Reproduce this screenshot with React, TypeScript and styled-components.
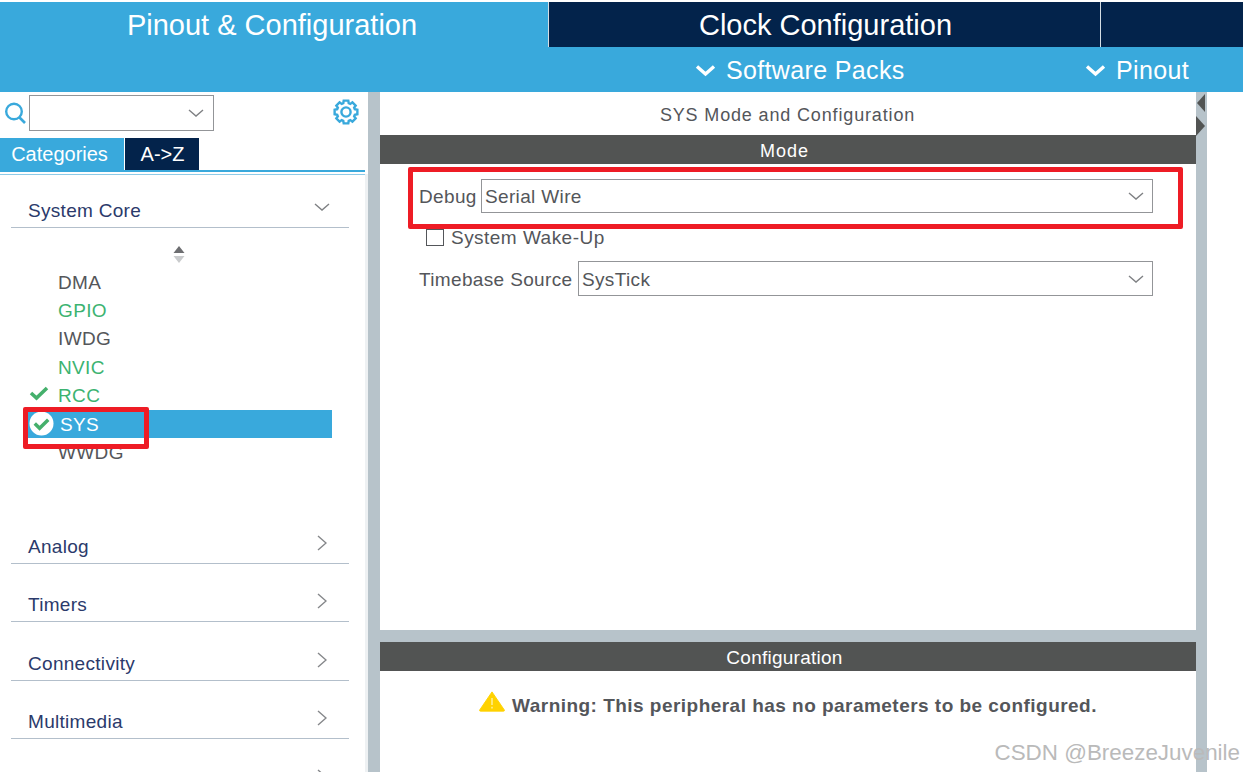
import React from 'react'
import styled, { createGlobalStyle } from 'styled-components'

const GlobalStyle = createGlobalStyle`
  html, body { margin: 0; padding: 0; background: #fff; }
  body { font-family: "Liberation Sans", Arial, sans-serif; }
`

const Page = styled.div`
  position: relative;
  width: 1243px;
  height: 772px;
  overflow: hidden;
  padding-top: 2px;
  box-sizing: border-box;
`
const TopTabs = styled.div`
  display: flex;
  height: 45px;
  background: #03234b;
`
const TopTab = styled.div<{ $active?: boolean; $w: number }>`
  width: ${p => p.$w}px;
  flex: none;
  box-sizing: border-box;
  background: ${p => (p.$active ? '#39a9dc' : '#03234b')};
  border-right: 1px solid #d5dde3;
  color: #fff;
  font-size: 29px;
  line-height: 47px;
  text-align: center;
  padding: ${p => (p.$active ? '0 4px 0 0' : '0 0 0 2px')};
`
const SubBar = styled.div`
  display: flex;
  height: 45px;
  box-sizing: border-box;
  padding-top: 2px;
  background: #39a9dc;
  color: #fff;
  font-size: 25px;
`
const SubItem = styled.div<{ $w: number }>`
  width: ${p => p.$w}px;
  flex: none;
  display: flex;
  align-items: center;
  gap: 10px;
  letter-spacing: 0.35px;
  svg { flex: none; }
`
const SubSpacer = styled.div`
  width: 695px;
  flex: none;
`
const Body = styled.div`
  display: flex;
  height: 680px;
`
const Side = styled.div`
  width: 365px;
  flex: none;
  display: flex;
  flex-direction: column;
`
const Gutter = styled.div`
  width: 3px;
  flex: none;
  margin-top: 82px;
  background: #eef1f3;
`
const Splitter = styled.div`
  width: 12px;
  flex: none;
  background: #b7c3ca;
`
const SearchRow = styled.div`
  display: flex;
  align-items: center;
  height: 42px;
  padding: 0 6px 4px 4px;
  flex: none;
  svg { flex: none; }
`
const SearchBox = styled.div`
  width: 185px;
  height: 36px;
  margin-left: 3px;
  box-sizing: border-box;
  border: 1px solid #939598;
  display: flex;
  align-items: center;
  justify-content: flex-end;
  padding-right: 9px;
`
const Cog = styled.div`
  margin-left: auto;
  margin-bottom: 3px;
  display: flex;
`
const SideTabs = styled.div`
  display: flex;
  height: 32px;
  border-bottom: 2px solid #39a9dc;
  box-shadow: 0 2px 0 #fff, 0 3px 0 #8ecbe8;
  flex: none;
`
const SideTab = styled.div<{ $dark?: boolean }>`
  width: ${p => (p.$dark ? 74 : 124)}px;
  box-sizing: border-box;
  padding: ${p => (p.$dark ? '0 0 0 1px' : '0 5px 0 0')};
  margin-right: 1px;
  background: ${p => (p.$dark ? '#03234b' : '#39a9dc')};
  color: #fff;
  font-size: 20px;
  line-height: 32px;
  text-align: center;
`
const Group = styled.div<{ $h: number }>`
  height: ${p => p.$h}px;
  margin: 0 16px 0 11px;
  box-sizing: border-box;
  border-bottom: 1px solid #b3bfcb;
  display: flex;
  align-items: flex-end;
  justify-content: space-between;
  padding: 0 19px 5px 17px;
  color: #2b3a6b;
  font-size: 19px;
  letter-spacing: 0.3px;
  line-height: 22px;
  flex: none;
`
const Caret = styled.div<{ $up: number; $side?: number }>`
  display: flex;
  margin-left: auto;
  margin-bottom: ${p => p.$up}px;
  margin-right: ${p => p.$side || 0}px;
`
const Stepper = styled.div`
  display: flex;
  justify-content: center;
  height: 22px;
  padding: 18px 7px 0 0;
  flex: none;
`
const ItemList = styled.div`
  height: 241px;
  flex: none;
  display: flex;
  flex-direction: column;
`
const Item = styled.div<{ $color?: string; $selected?: boolean }>`
  height: 28.4px;
  width: 308px;
  margin-left: 24px;
  flex: none;
  display: flex;
  align-items: center;
  box-sizing: border-box;
  padding: 1px 0 0 ${p => (p.$selected ? 36 : 34)}px;
  background: ${p => (p.$selected ? '#39a9dc' : 'transparent')};
  color: ${p => (p.$selected ? '#fff' : p.$color || '#54565a')};
  font-size: 19px;
  position: relative;
  letter-spacing: 0.35px;
`
const ItemIcon = styled.span<{ $top: number }>`
  position: absolute;
  left: 5px;
  top: ${p => p.$top}px;
  display: flex;
`
const Main = styled.div`
  width: 816px;
  flex: none;
  display: flex;
  flex-direction: column;
`
const ModeTitle = styled.div`
  height: 43px;
  flex: none;
  text-align: center;
  color: #54565a;
  font-size: 18px;
  line-height: 47px;
  padding-right: 1px;
  letter-spacing: 0.85px;
`
const Band = styled.div`
  height: 29px;
  flex: none;
  background: #525453;
  color: #fff;
  font-size: 18px;
  line-height: 32px;
  text-align: center;
  letter-spacing: 1px;
  padding-right: 7px;
`
const ConfigBand = styled(Band)`
  font-size: 19px;
  line-height: 31px;
  letter-spacing: 0.25px;
`
const ModePane = styled.div`
  height: 466px;
  flex: none;
  box-sizing: border-box;
  padding: 15px 43px 0 39px;
  display: flex;
  flex-direction: column;
`
const FormRow = styled.div`
  display: flex;
  align-items: center;
  color: #54565a;
  font-size: 19px;
  letter-spacing: 0.35px;
`
const FieldLabel = styled.span<{ $w: number }>`
  width: ${p => p.$w}px;
  padding-top: 2px;
  flex: none;
  white-space: nowrap;
`
const Select = styled.div<{ $h: number }>`
  flex: 1;
  height: ${p => p.$h}px;
  box-sizing: border-box;
  border: 1px solid #939598;
  display: flex;
  align-items: center;
  justify-content: space-between;
  padding: 2px 8px 0 3px;
  svg { margin-top: -2px; }
`
const CheckRow = styled.div`
  display: flex;
  align-items: center;
  gap: 7px;
  height: 23px;
  margin: 13px 0 12px 7px;
  color: #54565a;
  font-size: 19px;
  letter-spacing: 0.47px;
`
const CheckBox = styled.span`
  width: 18px;
  height: 17px;
  box-sizing: border-box;
  border: 1.5px solid #54565a;
  flex: none;
`
const PaneGap = styled.div`
  height: 12px;
  flex: none;
  background: #b7c3ca;
`
const ConfigPane = styled.div`
  flex: 1;
  display: flex;
  justify-content: center;
  padding: 20px 0 0 0;
`
const Warning = styled.div`
  display: flex;
  align-items: flex-start;
  gap: 7px;
  height: 26px;
  color: #54565a;
  font-size: 19px;
  font-weight: 700;
  line-height: 29px;
  letter-spacing: 0.47px;
  white-space: nowrap;
  svg { flex: none; }
`
const RightRail = styled.div`
  width: 11px;
  flex: none;
  background: #b7c3ca;
  position: relative;
`
const RailArrow = styled.span<{ $top: number; $right?: boolean }>`
  position: absolute;
  top: ${p => p.$top}px;
  left: ${p => (p.$right ? 0 : 1)}px;
  width: 0;
  height: 0;
  border-top: ${p => (p.$right ? 10 : 9)}px solid transparent;
  border-bottom: ${p => (p.$right ? 10 : 9)}px solid transparent;
  ${p => (p.$right ? 'border-left: 9px solid #525453;' : 'border-right: 8px solid #525453;')}
`
const RedBox = styled.div<{ $l: number; $t: number; $w: number; $h: number }>`
  position: absolute;
  left: ${p => p.$l}px;
  top: ${p => p.$t}px;
  width: ${p => p.$w}px;
  height: ${p => p.$h}px;
  box-sizing: border-box;
  border: 5px solid #ee1c25;
  border-radius: 2px;
`
const Watermark = styled.div`
  position: absolute;
  right: 3px;
  bottom: 6px;
  color: #bababa;
  font-size: 22.4px;
  line-height: 26px;
  white-space: nowrap;
`

function Chevron({ color = '#7f8184' }: { color?: string }) {
  return (
    <svg width="16" height="10" viewBox="0 0 16 10">
      <path d="M1 2 L8 8 L15 2" fill="none" stroke={color} strokeWidth="1.4" />
    </svg>
  )
}

function ChevronRight() {
  return (
    <svg width="10" height="16" viewBox="0 0 10 16">
      <path d="M1 1 L9 8 L1 15" fill="none" stroke="#85878a" strokeWidth="1.4" />
    </svg>
  )
}

function BoldChevron() {
  return (
    <svg width="21" height="13" viewBox="0 0 21 13">
      <path d="M2 2.5 L10.5 10 L19 2.5" fill="none" stroke="#fff" strokeWidth="3.4" />
    </svg>
  )
}

function Check() {
  return (
    <svg width="20" height="16" viewBox="0 0 20 16">
      <path d="M2 8 L7.5 13 L18 3" fill="none" stroke="#45b06c" strokeWidth="3.6" />
    </svg>
  )
}

function CircleCheck() {
  return (
    <svg width="25" height="25" viewBox="0 0 26 26">
      <circle cx="13" cy="13" r="12.5" fill="#fff" />
      <path d="M6 13 L11 18 L20 9" fill="none" stroke="#45b06c" strokeWidth="3.6" />
    </svg>
  )
}

function Search() {
  return (
    <svg width="22" height="24" viewBox="0 0 22 24">
      <circle cx="10" cy="10.5" r="7.8" fill="none" stroke="#39a9dc" strokeWidth="2.4" />
      <path d="M15.5 16.5 L21 22" stroke="#39a9dc" strokeWidth="2.6" />
    </svg>
  )
}

// outline of a gear with eight teeth, worked out from the angles
function gearPath() {
  const pts: string[] = []
  for (let i = 0; i < 8; i++) {
    const a = (i * Math.PI) / 4
    const offs: [number, number][] = [[-0.3, 9.2], [-0.2, 11.6], [0.2, 11.6], [0.3, 9.2]]
    offs.forEach(([d, r]) => {
      pts.push(`${(13 + r * Math.sin(a + d)).toFixed(2)} ${(13 - r * Math.cos(a + d)).toFixed(2)}`)
    })
  }
  return 'M' + pts.join(' L') + ' Z'
}

function Gear() {
  return (
    <svg width="26" height="26" viewBox="0 0 26 26">
      <path d={gearPath()} fill="none" stroke="#39a9dc" strokeWidth="2.4" />
      <circle cx="13" cy="13" r="4.6" fill="none" stroke="#39a9dc" strokeWidth="2.4" />
    </svg>
  )
}

function UpDown() {
  return (
    <svg width="14" height="17" viewBox="0 0 14 17">
      <path d="M7 0 L12.5 7 L1.5 7 Z" fill="#6d6e71" />
      <path d="M7 17 L12.5 10 L1.5 10 Z" fill="#c9cbcd" />
    </svg>
  )
}

function WarnIcon() {
  return (
    <svg width="26" height="21" viewBox="0 0 26 24" preserveAspectRatio="none">
      <path d="M13 1 L25.5 22 Q25.5 23 24.5 23 L1.5 23 Q0.5 23 0.5 22 Z" fill="#ffd200" stroke="#ffd200" strokeLinejoin="round" />
      <rect x="12" y="8" width="2" height="8" fill="#ffe873" />
      <rect x="12" y="18" width="2" height="2" fill="#ffe873" />
    </svg>
  )
}

const items = [
  { name: 'DMA' },
  { name: 'GPIO', color: '#3cb371' },
  { name: 'IWDG' },
  { name: 'NVIC', color: '#3cb371' },
  { name: 'RCC', color: '#3cb371', icon: 'check' },
  { name: 'SYS', selected: true, icon: 'circle' },
  { name: 'WWDG' },
]

const groups = [
  { name: 'Analog', h: 55 },
  { name: 'Timers', h: 58 },
  { name: 'Connectivity', h: 59 },
  { name: 'Multimedia', h: 58 },
  { name: '', h: 59 },
]

export default function App() {
  return (
    <Page>
      <GlobalStyle />
      <TopTabs>
        <TopTab $active $w={549}>Pinout &amp; Configuration</TopTab>
        <TopTab $w={552}>Clock Configuration</TopTab>
      </TopTabs>
      <SubBar>
        <SubSpacer />
        <SubItem $w={390}><BoldChevron />Software Packs</SubItem>
        <SubItem $w={158}><BoldChevron />Pinout</SubItem>
      </SubBar>
      <Body>
        <Side>
          <SearchRow>
            <Search />
            <SearchBox><Chevron /></SearchBox>
            <Cog><Gear /></Cog>
          </SearchRow>
          <SideTabs>
            <SideTab>Categories</SideTab>
            <SideTab $dark>A-&gt;Z</SideTab>
          </SideTabs>
          <Group $h={56}>
            System Core
            <Caret $up={10}><Chevron /></Caret>
          </Group>
          <Stepper><UpDown /></Stepper>
          <ItemList>
            {items.map(it => (
              <Item key={it.name} $color={it.color} $selected={it.selected}>
                {it.icon === 'check' && <ItemIcon $top={3}><Check /></ItemIcon>}
                {it.icon === 'circle' && <ItemIcon $top={1}><CircleCheck /></ItemIcon>}
                {it.name}
              </Item>
            ))}
          </ItemList>
          {groups.map(g => (
            <Group key={g.name} $h={g.h}>
              {g.name}
              <Caret $up={7} $side={3}><ChevronRight /></Caret>
            </Group>
          ))}
        </Side>
        <Gutter />
        <Splitter />
        <Main>
          <ModeTitle>SYS Mode and Configuration</ModeTitle>
          <Band>Mode</Band>
          <ModePane>
            <FormRow>
              <FieldLabel $w={62}>Debug</FieldLabel>
              <Select $h={34}>Serial Wire<Chevron /></Select>
            </FormRow>
            <CheckRow><CheckBox />System Wake-Up</CheckRow>
            <FormRow>
              <FieldLabel $w={159}>Timebase Source</FieldLabel>
              <Select $h={35}>SysTick<Chevron /></Select>
            </FormRow>
          </ModePane>
          <PaneGap />
          <ConfigBand>Configuration</ConfigBand>
          <ConfigPane>
            <Warning>
              <WarnIcon />
              Warning: This peripheral has no parameters to be configured.
            </Warning>
          </ConfigPane>
        </Main>
        <RightRail>
          <RailArrow $top={2} />
          <RailArrow $top={24} $right />
        </RightRail>
      </Body>
      <RedBox $l={23} $t={407} $w={126} $h={42} />
      <RedBox $l={408} $t={167} $w={775} $h={62} />
      <Watermark>CSDN @BreezeJuvenile</Watermark>
    </Page>
  )
}
